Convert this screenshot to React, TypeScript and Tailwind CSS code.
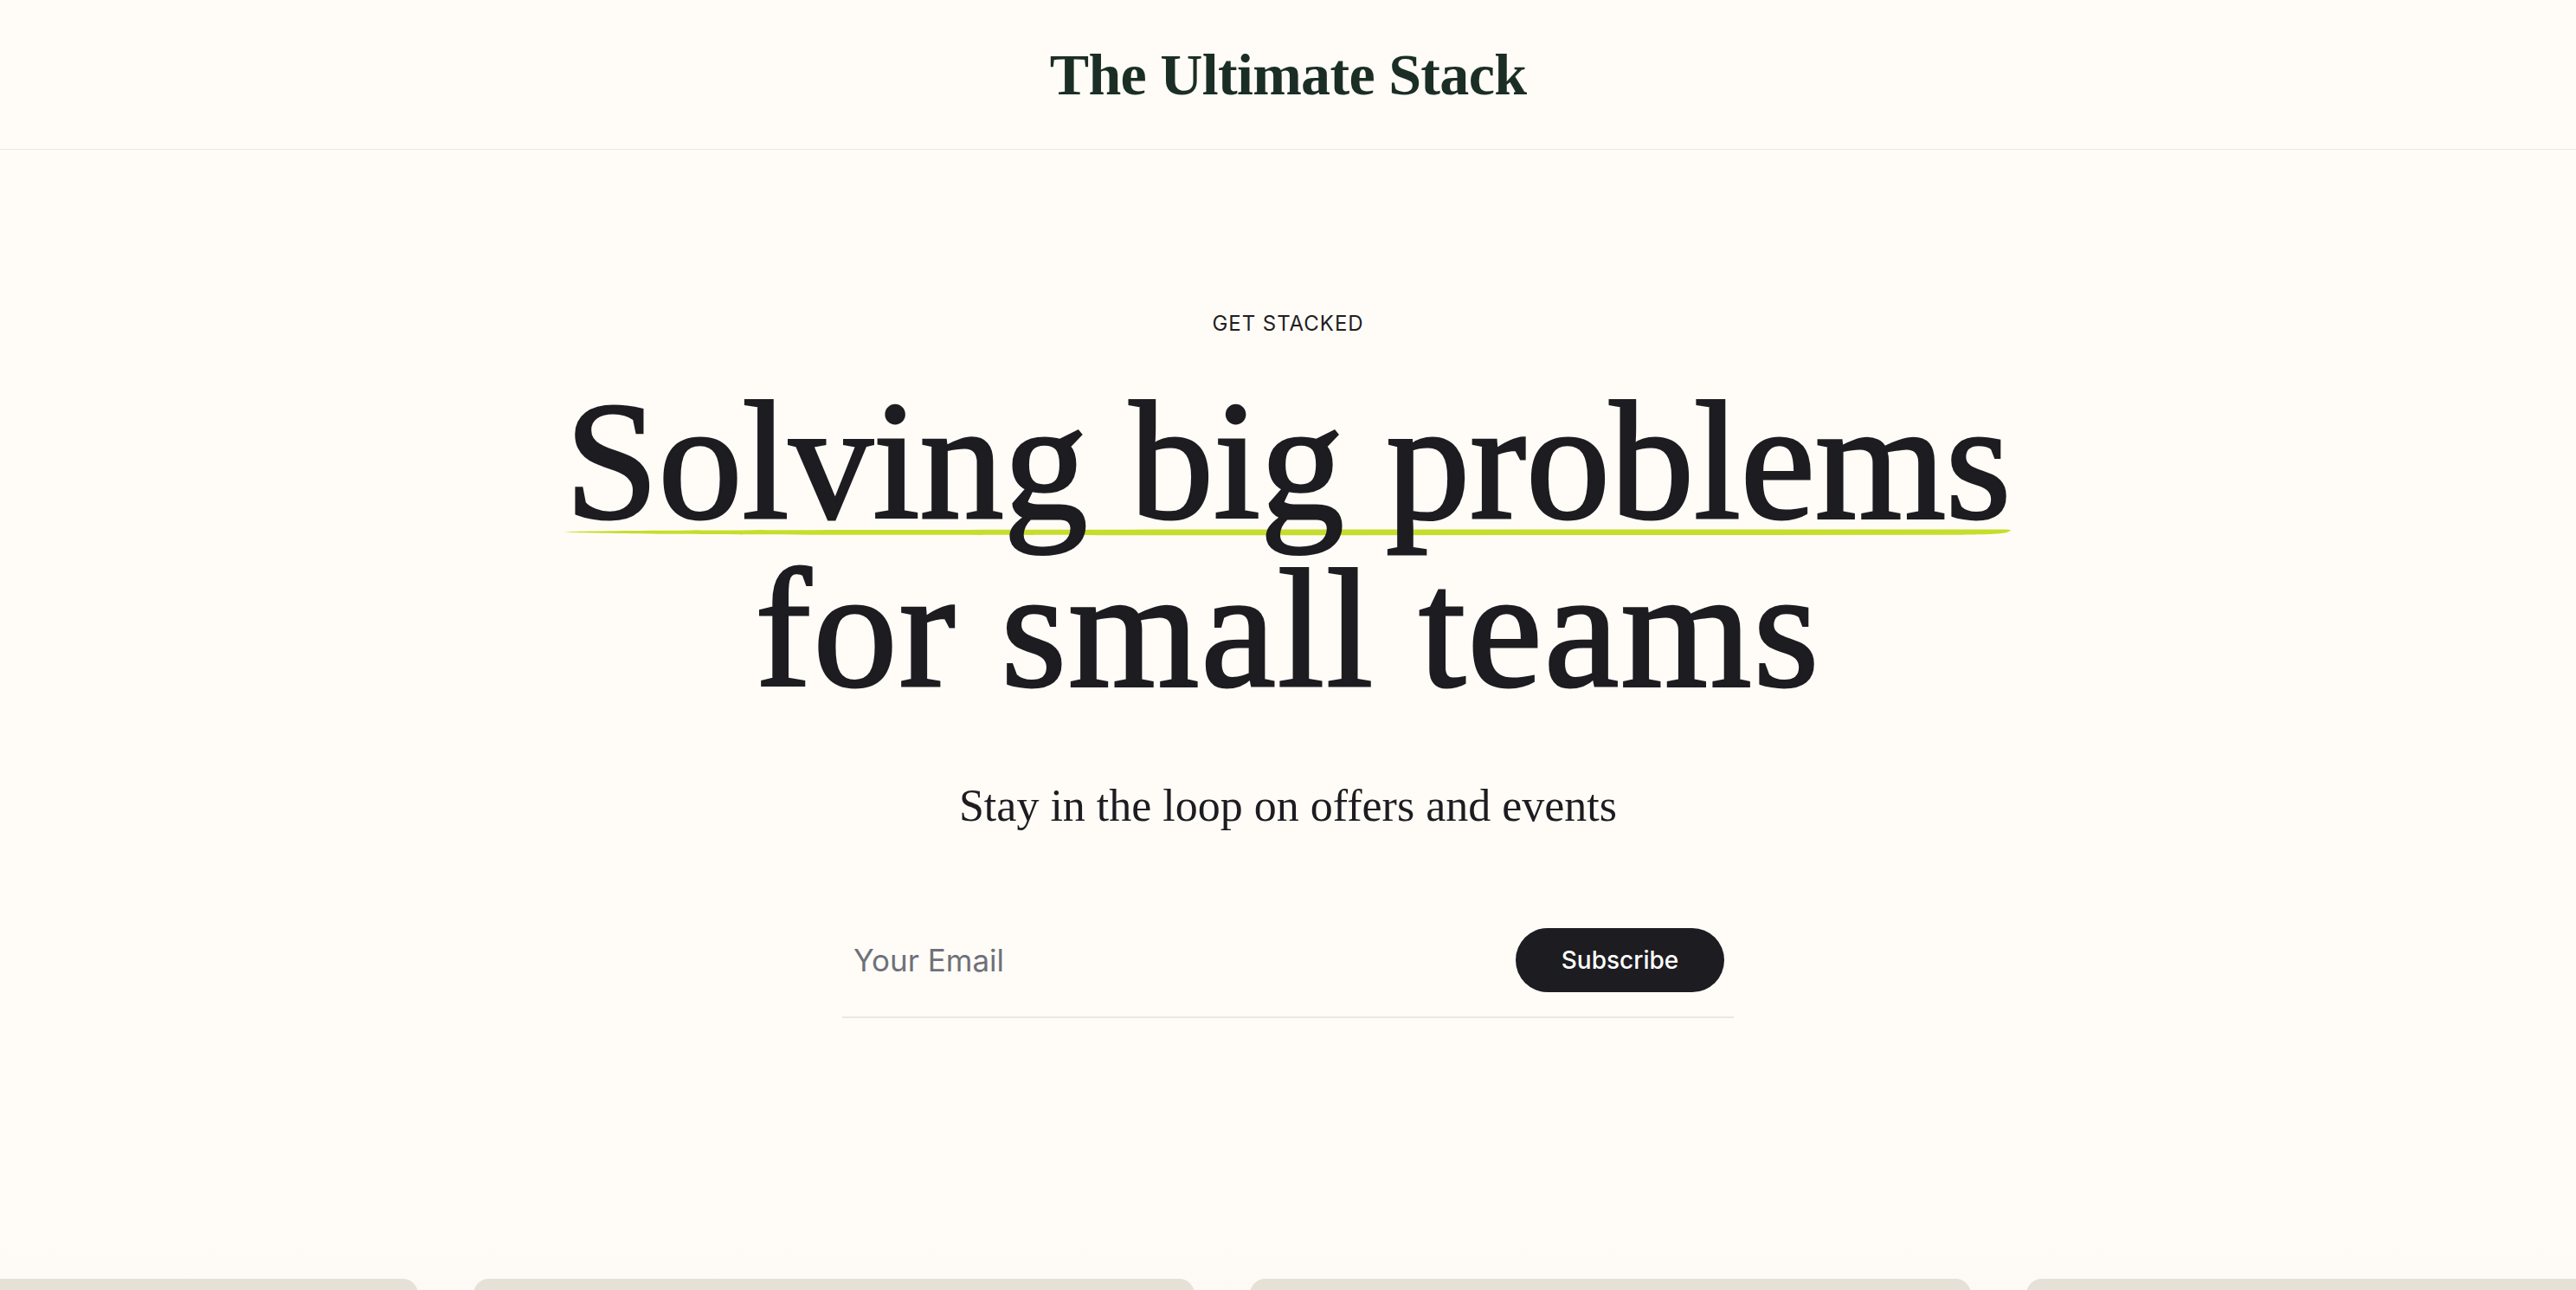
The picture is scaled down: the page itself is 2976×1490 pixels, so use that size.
import React from "react";

const serif = "font-['Liberation_Serif','Times_New_Roman',serif]";
const sans = "font-['Inter','Liberation_Sans',sans-serif]";

function Underline() {
  // lime brush stroke under the first headline line
  return (
    <svg
      className="absolute left-[-2px] right-[-2px] top-[175px] h-[8px] w-[calc(100%+4px)]"
      viewBox="0 0 1674 8"
      preserveAspectRatio="none"
      aria-hidden="true"
    >
      <path
        d="M0 3.6 C 40 1.2, 300 0.9, 900 0.6 L 1662 0.4 C 1672 0.4, 1674 1.2, 1668 3.4 C 1664 5.2, 1650 6.6, 1600 6.8 L 900 7.2 C 300 7.3, 40 6.4, 0 3.6 Z"
        fill="#c7dd2e"
      />
    </svg>
  );
}

export default function App() {
  const cards = [0, 1, 2, 3];

  return (
    <div className="h-[1490px] w-full overflow-hidden bg-[#fffcf7]">
      {/* Top bar */}
      <header className="flex h-[173px] items-center justify-center border-b border-[#e8e6e1]">
        <a
          href="#"
          className={`${serif} text-[68px] font-bold leading-none tracking-[-0.01em] text-[#1b2e25]`}
        >
          The Ultimate Stack
        </a>
      </header>

      {/* Hero */}
      <main className="flex flex-col items-center pt-[185px]">
        <span className={`${sans} text-[24px] leading-[32px] tracking-[0.04em] text-[#1f1e22]`}>
          GET STACKED
        </span>

        <h1
          className={`${serif} mt-[46px] text-center text-[194px] leading-[194px] text-[#1d1c20] [-webkit-text-stroke:3px_#1d1c20]`}
        >
          <span className="relative inline-block">
            <Underline />
            <span className="relative">Solving big problems</span>
          </span>
          <span className="block tracking-[0.012em]">for small teams</span>
        </h1>

        <p className={`${serif} mt-[76px] text-[52px] leading-[62px] text-[#1d1c20]`}>
          Stay in the loop on offers and events
        </p>

        <form
          onSubmit={(e) => e.preventDefault()}
          className="mt-[110px] flex w-[1030px] items-center justify-between border-b-2 border-[#ebe8df] pb-[28px] pl-[13px] pr-[11px]"
        >
          <input
            type="email"
            placeholder="Your Email"
            className={`${sans} flex-1 bg-transparent text-[35px] text-[#1d1c20] outline-none placeholder:text-[#6e717a]`}
          />
          <button
            type="submit"
            className={`${sans} h-[74px] w-[241px] rounded-full bg-[#1d1c20] text-[28px] font-medium text-white`}
          >
            Subscribe
          </button>
        </form>
      </main>

      {/* Card strip peeking in at the bottom */}
      <section className="mt-[252px] bg-gradient-to-b from-[#fffcf7] to-[#f1eee9] pt-[49px]">
        <div className="-ml-[350px] flex gap-[64px]">
          {cards.map((c) => (
            <div
              key={c}
              className="h-[400px] w-[833px] shrink-0 rounded-t-[18px] bg-[#e5e1d7]"
            />
          ))}
        </div>
      </section>
    </div>
  );
}
